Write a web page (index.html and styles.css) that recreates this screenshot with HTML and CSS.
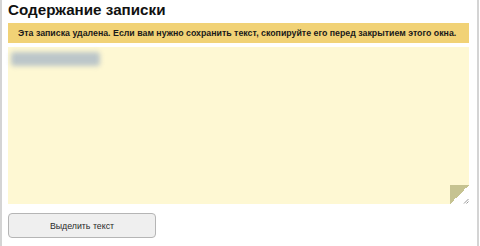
FILE: index.html
```html
<!DOCTYPE html>
<html lang="ru">
<head>
<meta charset="utf-8">
<title>Содержание записки</title>
<link rel="stylesheet" href="styles.css">
</head>
<body>
<div class="frame">
  <h1 class="title">Содержание записки</h1>
  <div class="banner">Эта записка удалена. Если вам нужно сохранить текст, скопируйте его перед закрытием этого окна.</div>
  <div class="note">
    <textarea class="note-text" readonly></textarea>
    <div class="redacted"></div>
    <div class="corner">
      <svg class="grip" width="6" height="6" viewBox="0 0 6 6"><path d="M5.5 1 L1 5.5 M5.5 3.5 L3.5 5.5" stroke="#8a8a8a" stroke-width="0.9" fill="none"/></svg>
    </div>
  </div>
  <button class="select-btn" type="button">Выделить текст</button>
</div>
</body>
</html>
```
FILE: styles.css
```css
html, body {
  margin: 0;
  padding: 0;
  background: #ffffff;
}
body {
  font-family: "Liberation Sans", Arial, sans-serif;
  color: #111;
}
.frame {
  box-sizing: border-box;
  width: 479px;
  height: 246px;
  border-left: 2px solid #d4d4d4;
  border-right: 2px solid #d4d4d4;
  padding: 0 8px 0 6px;
  display: flex;
  flex-direction: column;
  align-items: flex-start;
}
.title {
  margin: 0;
  font-size: 15.2px;
  line-height: 20px;
  font-weight: bold;
  color: #111;
}
.banner {
  align-self: stretch;
  margin-top: 3px;
  height: 20px;
  line-height: 20px;
  padding: 0 10px;
  background: #f1d276;
  font-size: 8.8px;
  font-weight: bold;
  color: #1a1a1a;
  white-space: nowrap;
}
.note {
  position: relative;
  align-self: stretch;
  margin-top: 4px;
  height: 157px;
}
.note-text {
  display: block;
  box-sizing: border-box;
  width: 100%;
  height: 100%;
  margin: 0;
  border: none;
  outline: none;
  resize: none;
  background: #fef8d3;
}
.redacted {
  position: absolute;
  left: 3px;
  top: 5px;
  width: 89px;
  height: 14px;
  background: #bcc6c9;
  border-radius: 3px;
  filter: blur(2.5px);
}
.corner {
  position: absolute;
  right: 0;
  bottom: 0;
  width: 19px;
  height: 19px;
  background: linear-gradient(to bottom right, #c6c391 50%, #ffffff 50%);
}
.grip {
  position: absolute;
  right: 0;
  bottom: 0;
}
.select-btn {
  margin-top: 9px;
  width: 148px;
  height: 25px;
  padding: 0;
  background: #efefef;
  border: 1px solid #b5b5b5;
  border-radius: 4px;
  font-family: "Liberation Sans", Arial, sans-serif;
  font-size: 8.8px;
  color: #2a2a2a;
}
```
